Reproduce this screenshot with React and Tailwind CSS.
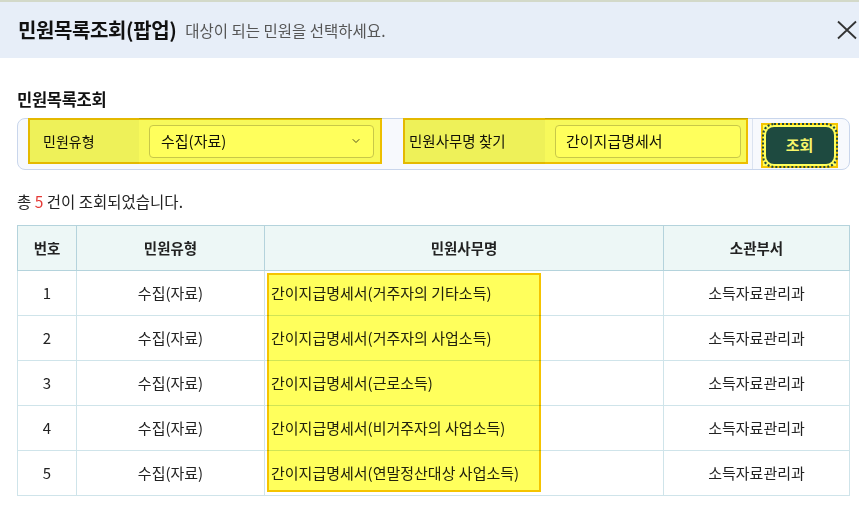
import { ChevronDown } from 'lucide-react';

const rows = [
  { no: 1, type: '수집(자료)', name: '간이지급명세서(거주자의 기타소득)', dept: '소득자료관리과' },
  { no: 2, type: '수집(자료)', name: '간이지급명세서(거주자의 사업소득)', dept: '소득자료관리과' },
  { no: 3, type: '수집(자료)', name: '간이지급명세서(근로소득)', dept: '소득자료관리과' },
  { no: 4, type: '수집(자료)', name: '간이지급명세서(비거주자의 사업소득)', dept: '소득자료관리과' },
  { no: 5, type: '수집(자료)', name: '간이지급명세서(연말정산대상 사업소득)', dept: '소득자료관리과' },
];

const font = { fontFamily: '"Noto Sans CJK KR", "Noto Sans", sans-serif' };

// marker-style highlight laid over a block
const Mark = ({ className = '' }) => (
  <div className={`absolute border-2 border-[#f5c400] bg-[#ffff5c] mix-blend-multiply pointer-events-none ${className}`} />
);

export default function App() {
  return (
    <div className="w-[859px] h-[509px] bg-white overflow-hidden text-[#222]" style={font}>
      {/* popup title bar */}
      <div className="h-[58px] bg-[#e7eef8] border-t-2 border-[#d3d9c9] flex items-center pl-[18px] pr-[2px]">
        <h1 className="text-[20px] font-bold tracking-[-0.4px] text-[#111]">민원목록조회(팝업)</h1>
        <span className="ml-[9px] text-[15.5px] text-[#555] mt-[2px]">대상이 되는 민원을 선택하세요.</span>
        <button className="ml-auto text-[#333]">
          <svg width="20" height="20" viewBox="0 0 20 20" stroke="currentColor" strokeWidth="1.8" fill="none">
            <path d="M1 1.5 19 18.5M19 1.5 1 18.5" />
          </svg>
        </button>
      </div>

      <div className="pl-[17px] pr-[9px]">
        <h2 className="mt-[30px] text-[16.5px] font-bold tracking-[-0.3px] text-[#111] leading-[22px]">민원목록조회</h2>

        {/* search panel */}
        <div className="mt-[8px] h-[52px] border border-[#c9d6ec] rounded-[8px] bg-[#f7f9fd] flex items-stretch">
          <div className="relative flex items-stretch ml-[10px] w-[354px] h-[46px] -mt-[1px]">
            <div className="w-[111px] bg-[#eef1f7] flex items-center pl-[15px] text-[14px] text-[#111]">민원유형</div>
            <div className="flex-1 flex items-center pl-[10px] pr-[8px]">
              <div className="w-full h-[33px] border border-[#c8c8c8] rounded-[4px] bg-white flex items-center px-[11px] text-[15px] text-[#111]">
                <span>수집(자료)</span>
                <ChevronDown size={12} className="ml-auto text-[#555]" strokeWidth={2} />
              </div>
            </div>
            <Mark className="inset-0" />
          </div>

          <div className="relative flex items-stretch ml-[21px] w-[345px] h-[46px] -mt-[1px]">
            <div className="w-[142px] bg-[#eef1f7] flex items-center pl-[6px] text-[14.5px] text-[#111]">민원사무명 찾기</div>
            <div className="flex-1 flex items-center pl-[10px] pr-[7px]">
              <div className="w-full h-[33px] border border-[#c8c8c8] rounded-[4px] bg-white flex items-center px-[10px] text-[15px] text-[#111]">
                간이지급명세서
              </div>
            </div>
            <Mark className="inset-0" />
          </div>

          <div className="ml-[4px] border-l border-[#dbe3f0]" />

          <div className="relative ml-[8px] mt-[4px] w-[77px] h-[45px] flex items-center justify-center border-2 border-[#f5c400] bg-[#ffff5c]">
            <button className="w-[68px] h-[37px] rounded-[8px] bg-[#1e4a40] text-[#f6f66a] text-[15px] font-bold outline-2 outline-dotted outline-[#1e4a40] outline-offset-[2px]">
              조회
            </button>
          </div>
        </div>

        <p className="mt-[20px] text-[15.5px] leading-[22px]">
          총 <span className="text-[#e53935]">5</span> 건이 조회되었습니다.
        </p>

        {/* result table */}
        <div className="relative mt-[13px] w-[833px]">
          <table className="w-full border-collapse text-[15px]">
            <thead>
              <tr className="bg-[#edf7f6] h-[45px] text-[14.5px]">
                <th className="w-[59px] border border-[#b4d3dc] font-bold">번호</th>
                <th className="w-[188px] border border-[#b4d3dc] font-bold">민원유형</th>
                <th className="w-[399px] border border-[#b4d3dc] font-bold">민원사무명</th>
                <th className="border border-[#b4d3dc] font-bold">소관부서</th>
              </tr>
            </thead>
            <tbody>
              {rows.map((r) => (
                <tr key={r.no} className="h-[45px]">
                  <td className="border border-[#cfe4ea] text-center">{r.no}</td>
                  <td className="border border-[#cfe4ea] text-center">{r.type}</td>
                  <td className="border border-[#cfe4ea] pl-[6px]">{r.name}</td>
                  <td className="border border-[#cfe4ea] text-center">{r.dept}</td>
                </tr>
              ))}
            </tbody>
          </table>
          <Mark className="left-[250px] top-[48px] w-[274px] h-[219px]" />
        </div>
      </div>
    </div>
  );
}
